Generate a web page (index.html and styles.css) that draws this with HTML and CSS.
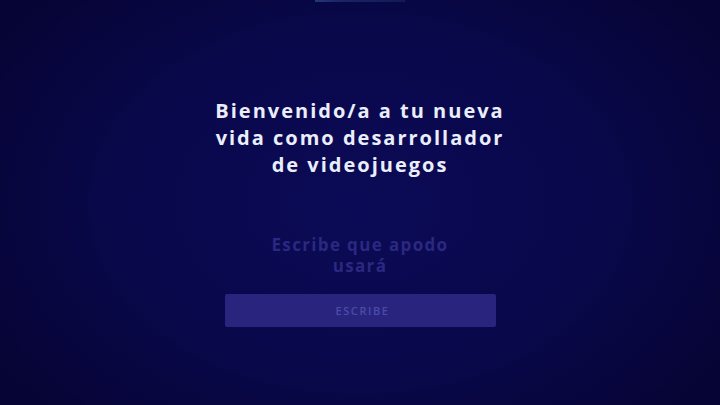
FILE: index.html
```html
<!DOCTYPE html>
<html lang="es">
<head>
<meta charset="utf-8">
<link rel="stylesheet" href="styles.css">
</head>
<body>
<div class="screen">
  <div class="topbar"></div>
  <h1 class="title">Bienvenido/a a tu nueva vida como desarrollador de videojuegos</h1>
  <div class="nick">Escribe que apodo usará</div>
  <button class="btn">ESCRIBE</button>
</div>
</body>
</html>
```
FILE: styles.css
```css
html, body {
  margin: 0;
  padding: 0;
}
body {
  width: 720px;
  height: 405px;
  overflow: hidden;
  background: radial-gradient(ellipse 60% 75% at 50% 50%, #0b0a56 0%, #09084b 55%, #060434 100%);
  font-family: "Open Sans", "Liberation Sans", sans-serif;
}
.screen {
  display: flex;
  flex-direction: column;
  align-items: center;
  height: 405px;
}
.topbar {
  width: 90px;
  height: 2px;
  background: linear-gradient(90deg, #25357a 0%, #1a2466 30%, #121a55 100%);
}
.title {
  margin: 95px 0 0;
  width: 305px;
  text-align: center;
  color: #eaeefb;
  font-size: 20px;
  font-weight: 700;
  line-height: 27px;
  letter-spacing: 2px;
}
.nick {
  margin-top: 56px;
  width: 200px;
  text-align: center;
  color: #2a2880;
  font-size: 17px;
  font-weight: 700;
  line-height: 21px;
  letter-spacing: 1.35px;
}
.btn {
  margin-top: 18px;
  width: 271px;
  height: 33px;
  border: none;
  border-radius: 2px;
  background: #29257f;
  color: #4c4ba8;
  font-family: inherit;
  font-size: 11px;
  font-weight: 600;
  letter-spacing: 1.6px;
  padding: 0 0 0 5px;
}
```
